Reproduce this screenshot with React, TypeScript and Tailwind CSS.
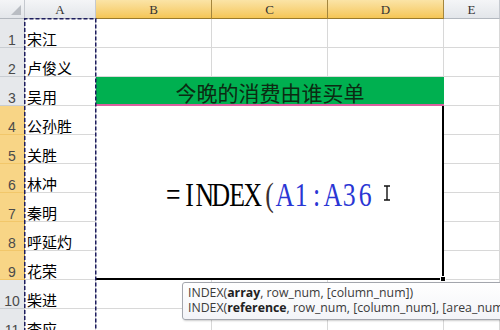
import React from 'react';

const names = ['宋江', '卢俊义', '吴用', '公孙胜', '关胜', '林冲', '秦明', '呼延灼', '花荣', '柴进', '李应'];
const formula = '=INDEX(A1:A36';

const grid = 'border-r border-b border-[#d8d8d8]';
const colHeadGray = 'bg-linear-to-b from-[#f4f5f7] to-[#e3e6ea] border-r border-b border-r-[#c5c9cf] border-b-[#b3b8bf]';
const colHeadSel = 'bg-linear-to-b from-[#fbe4a6] to-[#f5c655] border-r border-b border-r-[#a4863d] border-b-[#9a7a2c]';
const rowHeadGray = 'bg-[#e6e8eb] border-r border-b border-r-[#b3b8bf] border-b-[#c9cdd2]';
const rowHeadSel = 'bg-[#f8d586] border-r border-b border-r-[#b39446] border-b-[#f2c76a]';

function ColHead({ label, selected }: { label: string; selected?: boolean }) {
  return (
    <div
      className={`${selected ? colHeadSel : colHeadGray} flex items-center justify-center text-[13px] leading-none text-[#333] font-['Liberation_Serif',serif]`}
    >
      {label}
    </div>
  );
}

function RowHead({ n, selected }: { n: number; selected: boolean }) {
  return (
    <div
      className={`${selected ? rowHeadSel : rowHeadGray} flex items-end justify-center text-[14px] leading-[14px] text-[#4a4a4a] font-['Liberation_Sans',sans-serif]`}
    >
      {n}
    </div>
  );
}

export default function App() {
  return (
    <div className="relative w-[500px] h-[330px] overflow-hidden bg-white">
      <div className="grid grid-cols-[25px_71px_116px_116px_116px_1fr] grid-rows-[19px_repeat(11,29px)]">
        {/* corner */}
        <div className={`${colHeadGray} relative`}>
          <svg className="absolute right-[3px] bottom-[3px]" width="10" height="10" viewBox="0 0 10 10">
            <path d="M10 0V10H0Z" fill="#b9bdc3" />
          </svg>
        </div>
        <ColHead label="A" />
        <ColHead label="B" selected />
        <ColHead label="C" selected />
        <ColHead label="D" selected />
        <ColHead label="E" />

        {names.map((name, i) => {
          const r = i + 1;
          const sel = r >= 4 && r <= 9;
          return (
            <React.Fragment key={r}>
              <RowHead n={r} selected={sel} />
              <div
                className={`${grid} flex items-end pl-[2px] pb-[1px] text-[15px] leading-[15px] text-black font-['Noto_Sans_CJK_SC',sans-serif]`}
              >
                {name}
              </div>
              {r === 3 && (
                <div className="col-span-3 bg-[#00b050] border-b-2 border-[#dc5fa0] flex items-end justify-center pb-[1px] text-[21px] leading-[21px] text-[#0c2a12] font-['Noto_Sans_CJK_SC',sans-serif]">
                  今晚的消费由谁买单
                </div>
              )}
              {r === 4 && (
                <div className="relative col-span-3 row-span-6 bg-white border-r-2 border-b-2 border-black flex items-center justify-center pt-[7px]">
                  <div className="flex text-[33px] leading-[33px] font-['Liberation_Serif',serif]">
                    {formula.split('').map((ch, k) => (
                      <span key={k} className="w-[16px] flex justify-center">
                        <span className={`inline-block scale-x-[0.78] ${k >= 7 ? 'text-[#2a36d4]' : k === 6 ? 'text-[#3a3030]' : 'text-black'}`}>
                          {ch}
                        </span>
                      </span>
                    ))}
                  </div>
                  <svg className="absolute left-[287px] top-[79px]" width="8" height="16" viewBox="0 0 8 16">
                    <path d="M1 1h6M4 1v14M1 15h6" stroke="#111" strokeWidth="1.4" fill="none" />
                  </svg>
                  <div className="absolute -right-[4px] -bottom-[4px] w-[6px] h-[6px] bg-black border border-white" />
                </div>
              )}
              {(r <= 2 || r >= 10) && (
                <>
                  <div className={grid} />
                  <div className={grid} />
                  <div className={grid} />
                </>
              )}
              <div className={grid} />
            </React.Fragment>
          );
        })}
      </div>

      {/* copy marquee around column A */}
      <svg className="absolute left-[24px] top-[18px]" width="73" height="320" viewBox="0 0 73 320">
        <path d="M0.75 320V0.75H71.75V320" stroke="#1d1d5e" strokeWidth="1.5" strokeDasharray="4 2" fill="none" />
      </svg>

      {/* function tooltip */}
      <div className="absolute left-[182px] top-[282px] w-[340px] h-[38px] bg-linear-to-b from-white to-[#f3f4f8] border border-[#a3a6ad] rounded-[3px] shadow-[1px_1px_2px_rgba(0,0,0,0.2)] pl-[5px] pt-[2px] text-[12.3px] leading-[15px] text-[#3b3b3b] font-['Open_Sans',sans-serif] whitespace-nowrap">
        <div className="h-[15px]">
          INDEX(<b className="text-[#222]">array</b>, row_num, [column_num])
        </div>
        <div className="h-[15px]">
          INDEX(<b className="text-[#222]">reference</b>, row_num, [column_num], [area_num
        </div>
      </div>
    </div>
  );
}
